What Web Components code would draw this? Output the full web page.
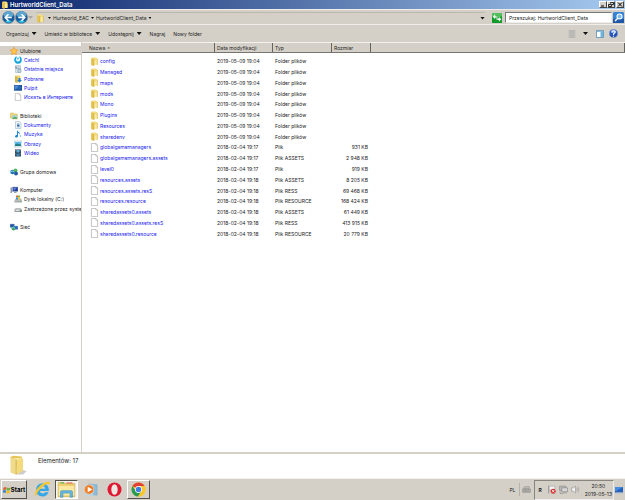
<!DOCTYPE html>
<html lang="pl">
<head>
<meta charset="utf-8">
<title>HurtworldClient_Data</title>
<style>
html, body { height: 100%; margin: 0; }
body { background: #fff; color: #222; font: 5px/8px Inter, "DejaVu Sans", sans-serif; --face: #d4d0c8; --link: #1717f0; overflow: hidden; }
</style>
</head>
<body>
<explorer-window>
  <title-bar slot="title">HurtworldClient_Data</title-bar>
  <address-bar slot="address"></address-bar>
  <command-bar slot="commands"></command-bar>
  <nav-tree slot="nav"></nav-tree>
  <file-list slot="files"></file-list>
  <details-pane slot="details">Elementów: 17</details-pane>
  <task-bar slot="taskbar"></task-bar>
</explorer-window>
<script>
const BASE = `<style>
*,:host{box-sizing:border-box}
button,input{font:inherit;color:inherit;margin:0;padding:0;border:0;background:none;border-radius:0;outline:0}
button{display:flex;align-items:center;white-space:nowrap}
a{color:inherit;text-decoration:none}
.arr{width:5px;height:3px;background:#111;clip-path:polygon(0 0,100% 0,50% 100%)}
</style>`;
const define = (name, html, setup) => customElements.define(name, class extends HTMLElement {
  constructor() {
    super();
    this.attachShadow({ mode: 'open' }).innerHTML = BASE + html;
  }
  connectedCallback() { if (setup) setup(this, this.shadowRoot); }
});

const ART = {
  folder: '<path d="M3 1h7l3 2v10H3z" fill="#f3dc7d"/><path d="M2 2l5 2v12l-5-2z" fill="#e3c251"/><path d="M7 6h6v8H7z" fill="#fbeb9f"/><path d="M7 4v12M13 3v11" stroke="#c9a63e" fill="none"/>',
  file: '<path d="M2.500.800h8l3 3v11.500h-11z" fill="#fff" stroke="#a6a6a6" stroke-width="1.200"/><path d="M10.500.800v3h3" fill="#eee" stroke="#a6a6a6"/>',
  star: '<path d="M8 .500l2.300 5 5.400.600-4 3.700 1.100 5.500L8 12.600 3.200 15.300l1.100-5.500-4-3.700 5.400-.600z" fill="#ffc64a" stroke="#e98d24" stroke-width="1.200"/>',
  catch: '<path d="M6 1C1.500 1 .500 5 .500 8S3 15.500 8 15.500 15.500 12 15.500 8 14.500 1 10 1l2 4c.800 3-.500 6-4 6S3.500 8 4.500 5z" fill="#11a5df"/><path d="M8 3v4" stroke="#11a5df" stroke-width="2.500"/>',
  recent: '<path d="M3 1h10v14H3z" fill="#dce8ef" stroke="#91a8b7"/><path d="M5 4h6M5 7h8M7 10h6" stroke="#6d8798"/><path d="M1 3l5 1-1 5z" fill="#8097a5"/><circle cx="11" cy="12" r="3.500" fill="#c4d5e2" stroke="#738b9b"/>',
  download: '<path d="M2 1h9l2 2v12H2z" fill="#f0d678"/><path d="M2 2l5 2v12l-5-2z" fill="#d5b446"/><path d="M9 6h4v4h3l-5 5-5-5h3z" fill="#247dce"/>',
  desktop: '<path d="M0 2h16v11H0z" fill="#16427f"/><path d="M1 3h14v8H1z" fill="#2869b5"/><path d="M1 3h9L3 11H1z" fill="#4f8ed1"/><path d="M0 13h16" stroke="#5b89bc" stroke-width="2"/>',
  libraries: '<path d="M1 2h6l2 2h5v8H1z" fill="#f2da7d" stroke="#c9ac50"/><path d="M4 6h11v8H4z" fill="#a8dce2" stroke="#dcc15f"/><path d="M5 12l4-3 5 2v3H5z" fill="#5cac76"/>',
  docs: '<path d="M3 1h8l3 3v11H3z" fill="#eef5fa" stroke="#8fa8bb"/><path d="M6 5h5M6 12h5" stroke="#7395b0"/><path d="M6 7h5v4H6z" fill="#2d6ca9"/>',
  music: '<path d="M7 1c1 4 6 3 5 8-1-2-3-3-4-3v6c0 4-6 4-6 1 0-2 2-3 4-3V1z" fill="#2387d0"/><circle cx="13" cy="12" r="1.500" fill="#58b0e4"/>',
  pictures: '<path d="M0 2h16v12H0z" fill="#e9f4fa" stroke="#9ab2c2"/><path d="M2 4h12v8H2z" fill="#57bce9"/><path d="M2 9l4-2 8 2v3H2z" fill="#257f86"/>',
  video: '<path d="M2 1h12v14H2z" fill="#24374c"/><path d="M5 2h6v5H5z" fill="#5cb1df"/><path d="M5 9h6v5H5z" fill="#3c88b9"/><path d="M3.500 2v13M12.500 2v13" stroke="#dce7ee" stroke-dasharray="1.500 1.500"/>',
  homegroup: '<circle cx="5" cy="8" r="4.500" fill="#2375b9"/><circle cx="11" cy="5" r="4" fill="#56b760"/><circle cx="12" cy="11" r="4" fill="#2759a6"/><path d="M1 8q4-4 7 0" stroke="#8fd1ef" stroke-width="2" fill="none"/>',
  computer: '<path d="M1 3h3v11H1z" fill="#8d9bac"/><path d="M5 2h11v9H5z" fill="#1c3693" stroke="#9eacc6"/><path d="M7 3h7l-5 6H7z" fill="#5e81d2"/><path d="M8 12h5v2H8z" fill="#9ba7b8"/>',
  disk: '<path d="M1 10l3-3h10l2 3v5H1z" fill="#a9adaf"/><path d="M1 10h15" stroke="#eee"/><path d="M4 1h4v4H4z" fill="#e86a32"/><path d="M8 1h4v4H8z" fill="#79b943"/><path d="M4 5h4v4H4z" fill="#359ad9"/><path d="M8 5h4v4H8z" fill="#f6c536"/><circle cx="13" cy="13" r="1" fill="#4bb43d"/>',
  drive: '<path d="M1 9l3-3h9l3 3v5H1z" fill="#969b9f"/><path d="M2 9l2-2h9l2 2z" fill="#e4e6e7"/><path d="M3 11h8" stroke="#e1e4e5" stroke-width="2"/><circle cx="13" cy="12" r="1" fill="#36a336"/>',
  network: '<path d="M0 2h9v7H0z" fill="#1e53a8" stroke="#a9bfd8"/><path d="M7 6h9v7H7z" fill="#1f63bf" stroke="#a9bfd8"/><circle cx="7" cy="11" r="4" fill="#3ea45e"/><path d="M4 10q3-3 6 1" stroke="#6ec1ef" stroke-width="2" fill="none"/>',
  back: '<circle cx="8" cy="8" r="7.500" fill="#175fa1" stroke="#83909c"/><circle cx="8" cy="8" r="6.500" fill="#145c9c"/><path d="M2 6a6 6 0 0 1 12 0q-6 3-12 0" fill="#5ba5d0"/><path d="M4 13q4-3 8 0-4 3-8 0" fill="#33c5ef"/><path d="M12 8H4m4-4L4 8l4 4" fill="none" stroke="#fff" stroke-width="2"/>',
  refresh: '<rect width="16" height="16" rx="1" fill="#139a2c"/><path d="M0 0h16v5q-8 3-16 0" fill="#52bf5e"/><path d="M5 2L1 6l4 4V7.500h2V11h2V5H5zM11 14l4-4-4-4v2.500H9V5H7v6h4z" fill="#fff" opacity=".9"/><path d="M8 4v8" stroke="#139a2c"/>',
  search: '<rect width="16" height="16" rx="2" fill="#3482d6"/><path d="M0 10h16v6H0z" fill="#1f58a9"/><circle cx="9.500" cy="6.500" r="3.700" fill="#82bbed" stroke="#fff" stroke-width="1.500"/><path d="M7 9l-4 4" stroke="#fff" stroke-width="2"/>',
  views: '<path d="M1 1h14v14H1z" fill="#dddcd8"/><path d="M1 2h14M1 6h14M1 10h14M1 14h14" stroke="#8f8e8b" stroke-width="1.500"/><path d="M5 1v14M10 1v14" stroke="#b0afaa" stroke-width="1.500"/>',
  pane: '<path d="M1 1h14v14H1z" fill="#fff" stroke="#4d86ac" stroke-width="1.500"/><path d="M9 4h5v10H9z" fill="#69b6e2"/><path d="M1 2.500h14" stroke="#6aa5ca" stroke-width="2"/>',
  help: '<circle cx="8" cy="8" r="7.300" fill="#2653b9" stroke="#8097c4"/><path d="M3 6a5 5 0 0 1 10 0q-5 2-10 0" fill="#6e96e4"/><path d="M5.500 6q0-3 3-2.600 3.300.400 2 3.200L8 9v1.500M8 12v1.700" stroke="#fff" stroke-width="1.900" fill="none"/>',
  bigfolder: '<path d="M9 11l6 2-3 2.500H6z" fill="#aaa" opacity=".6"/><path d="M2 1.500l2-1 7 .700v12L4 15z" fill="#e5c454"/><path d="M5 2.500h5.500v10.500L5 14z" fill="#fff6c6"/><path d="M6 4l6-1.500v10L7 15.500z" fill="#f3da7d"/><path d="M2 1.500l4.500 2V15.500L2 14z" fill="#f0da8c"/><path d="M6.500 3.500v12" stroke="#c9aa48" stroke-width=".600"/>',
  flag: '<path d="M1 4q3-3 6-1L6 8Q4 6 0 8z" fill="#e1562c"/><path d="M8 3q3 2 7 0l-1 5q-4 2-7 0z" fill="#69b23c"/><path d="M0 9q3-2 6 0l-1 5q-3-2-6 0z" fill="#2f7fd0"/><path d="M7 9q3 2 7 0l-1 5q-4 2-7 0z" fill="#f4bd26"/>',
  ie: '<path d="M14 9.500H5.300q.400 2.300 2.900 2.300 1.500 0 2.300-1.200h3.200Q12.300 14.500 8.200 14.500q-6-.300-6.200-6.300Q2.300 2 8.200 2q6 .300 5.800 7.500zM5.300 7.200h5.400Q10.300 4.700 8 4.700T5.300 7.200z" fill="#35a7e6" fill-rule="evenodd"/><path d="M2.300 14.500C-.500 13 1 9.500 4 6S13-.800 14.800 1.200c.700.800.400 2-.200 3.300.200-1.200-.200-2-1.300-2C10.500 2.500 1.500 10 2.300 14.500z" fill="#f6c62d"/>',
  explorer: '<path d="M1 2h5l1 1h8v11H1z" fill="#edcf70" stroke="#cba947" stroke-width=".500"/><path d="M3 2h3v1H3z" fill="#55b65d"/><path d="M8 2h5v1H8z" fill="#e0715c"/><path d="M1.500 5h13v8h-13z" fill="#fbe8a0"/><path d="M3 14.500V10q0-1 1-1h8q1 0 1 1v4.500h-2V11H5v3.500z" fill="#67b8df" stroke="#3c8fb9" stroke-width=".500"/>',
  wmp: '<path d="M6 2l9 1v11l-9-1z" fill="#8dbddc" stroke="#6b9fbe" stroke-width=".500"/><path d="M2 2l9 1v12l-9-1z" fill="#b3d8ee" opacity=".800"/><circle cx="6.500" cy="8" r="5" fill="#f17b22" stroke="#e9d1ba" stroke-width=".700"/><path d="M5 5l5 3-5 3z" fill="#fff"/>',
  opera: '<ellipse cx="8" cy="8" rx="7.500" ry="7.500" fill="#df1932"/><ellipse cx="8" cy="8" rx="3.400" ry="5.600" fill="#eee8e3"/>',
  chrome: '<circle cx="8" cy="8" r="7.500" fill="#fbc72d"/><path d="M8 8L1.500 4.250A7.500 7.500 0 0 1 14.500 4.250H8z" fill="#e34133"/><path d="M1.500 4.250A7.500 7.500 0 0 0 7.500 15.500L11 10 8 8 5 9.500z" fill="#299b52"/><path d="M8 4.250h6.500A7.500 7.500 0 0 1 7.500 15.500L11.200 10z" fill="#fbc72d"/><circle cx="8" cy="8" r="3.700" fill="#fff"/><circle cx="8" cy="8" r="2.900" fill="#3f7ee3"/>',
  keyboard: '<path d="M4 3h9l-1 4H3z" fill="#c2c1bd" stroke="#8d8c88"/><path d="M1 7h14v6H1z" fill="#b5b4b0" stroke="#878682"/><path d="M3 9h10M3 11h10" stroke="#777" stroke-dasharray="1.500 1"/>',
  action: '<path d="M3 1v14" stroke="#8b8b8b" stroke-width="1.500"/><path d="M4 2h10v7H4z" fill="#f4f4f4" stroke="#999"/><circle cx="11" cy="11" r="4.500" fill="#d63539"/><path d="M9 9l4 4m0-4l-4 4" stroke="#fff" stroke-width="1.500"/>',
  lan: '<path d="M1 2h11v8H1z" fill="#bbb" stroke="#838383"/><path d="M5 5h10v7H5z" fill="#d8d8d8" stroke="#777"/><path d="M7 14h7M2 12v3h5" stroke="#777" fill="none"/>',
  sound: '<path d="M1 5h3l4-3v12l-4-3H1z" fill="#f3f3f3" stroke="#858585"/><path d="M10 5q2 3 0 6M12 3q4 5 0 10" stroke="#929292" fill="none"/>',
  showdesk: '<path d="M0 2h16v11H0z" fill="#2361bd"/><path d="M0 2h16L3 10H0z" fill="#458be0"/><path d="M3 14h11" stroke="#a9bcd3" stroke-width="2"/>'
};
customElements.define('ui-icon', class extends HTMLElement {
  connectedCallback() {
    if (this.shadowRoot) return;
    this.attachShadow({ mode: 'open' }).innerHTML = `<style>:host{display:block;flex:none;width:var(--size,8px);height:var(--size,8px)}svg{display:block;width:100%;height:100%}</style><svg viewBox="0 0 16 16" aria-hidden="true">${ART[this.getAttribute('name')]}</svg>`;
  }
});

define('explorer-window', `<style>
:host{display:flex;flex-direction:column;height:100%;background:var(--face)}
main{flex:1;min-height:0;display:grid;grid-template-columns:81px 1fr;column-gap:1px}
</style><slot name="title"></slot><slot name="address"></slot><slot name="commands"></slot>
<main><slot name="nav"></slot><slot name="files"></slot></main><slot name="details"></slot><slot name="taskbar"></slot>`);

define('title-bar', `<style>
:host{display:flex;align-items:center;height:9px;background:linear-gradient(90deg,#0a246a,#a6caf0);color:#fff;font-size:6px;font-weight:600;padding:0 1px;gap:1px}
h1{font:inherit;margin:0;flex:1}
.b{display:flex}
button{width:8px;height:7px;background:var(--face);border:1px solid;border-color:#fff #404040 #404040 #fff;justify-content:center}
button:last-child{margin-left:1px}
svg{width:6px;height:5px;flex:none}
path{fill:none;stroke:#000}
</style><ui-icon name="folder"></ui-icon><h1><slot></slot></h1><div class="b">
<button aria-label="Minimalizuj"><svg viewBox="0 0 6 5"><path d="M1 4h3"/></svg></button>
<button aria-label="Przywróć"><svg viewBox="0 0 6 5"><path d="M2.500 1.500V.500h3v2H4M.500 2.500h3v2h-3z" stroke-width=".800"/></svg></button>
<button aria-label="Zamknij"><svg viewBox="0 0 6 5"><path d="M1 .500l4 4m0-4l-4 4"/></svg></button></div>`);

define('address-bar', `<style>
:host{display:flex;align-items:center;height:16px;padding:1px 1px 0 2px;border-bottom:1px solid #f0eeea;border-top:1px solid #f0eeea}
.nav{display:flex;--size:13px}
.nav .fwd{transform:scaleX(-1)}
.nav .arr{background:#aaa8a3}
.path{flex:1;display:flex;align-items:center;gap:2px;margin:0 7px 0 3px;height:12px;border-top:1px solid #bbb8b0}
.path ui-icon{--size:9px;margin-right:1px}
.dot{width:3px;height:2px;background:#111;clip-path:polygon(0 0,100% 0,50% 100%)}
.path .last{margin-left:auto}
.go{--size:10px;margin-right:3px}
input{width:107px;height:11px;background:#fff;border:1px solid;border-color:#777 #eee #eee #777;padding:0 3px}
input::placeholder{color:#222;opacity:1}
.find{--size:11px;margin-left:1px}
</style><div class="nav"><button aria-label="Wstecz"><ui-icon name="back"></ui-icon></button><button class="fwd" aria-label="Dalej"><ui-icon name="back"></ui-icon></button><button aria-label="Ostatnie strony"><i class="arr"></i></button></div>
<div class="path"><ui-icon name="folder"></ui-icon><i class="dot"></i><button>Hurtworld_EAC</button><i class="dot"></i><button>HurtworldClient_Data</button><i class="dot"></i><button class="last" aria-label="Poprzednie lokalizacje"><i class="arr"></i></button></div>
<button class="go" aria-label="Odśwież"><ui-icon name="refresh"></ui-icon></button>
<input type="search" aria-label="Przeszukaj" placeholder="Przeszukaj: HurtworldClient_Data">
<button class="find" aria-label="Szukaj"><ui-icon name="search"></ui-icon></button>`);

define('command-bar', `<style>
:host{display:flex;align-items:center;height:17px;padding:0 7px 0 6px;gap:8px}
button{gap:3px}
.r{margin-left:auto;display:flex;gap:5px;align-items:center}
.r button{gap:7px}
.r button:first-child{margin-right:3px}
.help{--size:9px}
</style><button>Organizuj<i class="arr"></i></button><button>Umieść w bibliotece<i class="arr"></i></button><button>Udostępnij<i class="arr"></i></button><button>Nagraj</button><button>Nowy folder</button>
<div class="r"><button aria-label="Zmień widok"><ui-icon name="views"></ui-icon><i class="arr"></i></button><button aria-label="Okienko podglądu"><ui-icon name="pane"></ui-icon></button><button class="help" aria-label="Pomoc"><ui-icon name="help"></ui-icon></button></div>`);

const TREE = [
  ['star', 'Ulubione', 0], ['catch', 'Catch!', 1], ['recent', 'Ostatnie miejsca', 1], ['download', 'Pobrane', 1], ['desktop', 'Pulpit', 1], ['file', 'Искать в Интернете', 1], null,
  ['libraries', 'Biblioteki', 0], ['docs', 'Dokumenty', 1], ['music', 'Muzyka', 1], ['pictures', 'Obrazy', 1], ['video', 'Wideo', 1], null,
  ['homegroup', 'Grupa domowa', 0], null,
  ['computer', 'Komputer', 0], ['disk', 'Dysk lokalny (C:)', 2], ['drive', 'Zastrzeżone przez syste', 2], null,
  ['network', 'Sieć', 0]
];
define('nav-tree', `<style>
:host{display:block;background:#fff;padding-top:4px;overflow:hidden}
ul{list-style:none;margin:0;padding:0;display:grid;grid-template-rows:repeat(20,1fr);height:186px}
li{min-height:0;display:flex;align-items:center;padding-left:10px}
li:first-child{background:var(--face)}
a{display:flex;align-items:center;gap:2px;white-space:nowrap}
.l1,.l2{padding-left:14px}
.l1{color:var(--link)}
</style><ul></ul>`, (el, root) => {
  root.querySelector('ul').innerHTML = TREE.map(t => t ? `<li class="l${t[2]}"><a href="#"><ui-icon name="${t[0]}"></ui-icon>${t[1]}</a></li>` : '<li role="presentation"></li>').join('');
});

const FILES = [
  ...['config', 'Managed', 'maps', 'mods', 'Mono', 'Plugins', 'Resources', 'sharedenv'].map(n => [n, '2019-05-09 19:04', 'Folder plików', '']),
  ['globalgamemanagers', '2018-02-04 19:17', 'Plik', '931 KB'],
  ['globalgamemanagers.assets', '2018-02-04 19:17', 'Plik ASSETS', '2 948 KB'],
  ['level0', '2018-02-04 19:17', 'Plik', '919 KB'],
  ['resources.assets', '2018-02-04 19:18', 'Plik ASSETS', '8 205 KB'],
  ['resources.assets.resS', '2018-02-04 19:18', 'Plik RESS', '69 468 KB'],
  ['resources.resource', '2018-02-04 19:18', 'Plik RESOURCE', '168 424 KB'],
  ['sharedassets0.assets', '2018-02-04 19:18', 'Plik ASSETS', '61 449 KB'],
  ['sharedassets0.assets.resS', '2018-02-04 19:18', 'Plik RESS', '413 915 KB'],
  ['sharedassets0.resource', '2018-02-04 19:18', 'Plik RESOURCE', '20 779 KB']
];
define('file-list', `<style>
:host{display:block;background:#fff;min-width:0}
table,thead{display:block}
tbody{display:grid;grid-auto-rows:1fr;height:183px;margin-top:3px}
tr{display:grid;grid-template-columns:133px 58px 59px 39px 1fr;align-items:center}
thead tr{height:11px;background:var(--face);border-top:1px solid #f4f2ee;border-bottom:1px solid #77756f;align-items:stretch}
th{font-weight:400;text-align:left;padding:0 2px;border-right:1px solid #66645f;display:flex;align-items:center;gap:2px}
th:first-child{padding-left:7px}
td{padding:0 0 0 2px;white-space:nowrap}
td:first-child{padding-left:8px}
td:nth-child(4){text-align:right;padding:0 3px 0 0}
a{display:flex;align-items:center;gap:1px;color:var(--link);--size:9px}
.up{width:3px;height:2px;background:#77756f;clip-path:polygon(50% 0,100% 100%,0 100%)}
</style><table><thead><tr><th>Nazwa<i class="up"></i></th><th>Data modyfikacji</th><th>Typ</th><th>Rozmiar</th><th></th></tr></thead><tbody></tbody></table>`, (el, root) => {
  root.querySelector('tbody').innerHTML = FILES.map(f => `<tr><td><a href="#"><ui-icon name="${f[3] ? 'file' : 'folder'}"></ui-icon>${f[0]}</a></td><td>${f[1]}</td><td>${f[2]}</td><td>${f[3]}</td><td></td></tr>`).join('');
});

define('details-pane', `<style>
:host{display:flex;height:26px;background:#fff;border-top:2px solid var(--face);padding:1px 8px;gap:10px;font-size:6px;--size:20px}
span{padding-top:2px}
</style><ui-icon name="bigfolder"></ui-icon><span><slot></slot></span>`);

define('task-bar', `<style>
:host{display:flex;align-items:center;height:22px;background:var(--face);border-top:1px solid #f4f2ee;padding:0 2px 0 1px}
.raised{border:1px solid;border-color:#fff #55534e #55534e #fff}
.start{height:19px;width:26px;justify-content:center;font-size:6px;font-weight:700;color:#000}
.apps{display:flex;--size:17px;margin-left:4px;gap:1px}
.apps button{width:23px;height:19px;justify-content:center}
.apps .on{background:#f6f4f0;border:1px solid;border-color:#55534e #fff #fff #55534e;--size:19px}
.apps .on ~ button{--size:15px}
.tray{margin-left:auto;display:flex;align-items:center;--size:9px}
.kb{border-left:1px solid #b5b2aa;margin-left:4px;padding:0 3px 0 2px;height:13px}
.box{display:flex;align-items:center;gap:3px;height:20px;border:1px solid;border-color:#88857e #eee #eee #88857e;padding:0 1px 0 3px}
.r{font-weight:700;padding-right:2px}
time{text-align:center;padding-left:2px}
time span{display:block}
.show{--size:8px;margin-left:1px}
</style><button class="start raised"><ui-icon name="flag"></ui-icon>Start</button>
<div class="apps"><button aria-label="Internet Explorer"><ui-icon name="ie"></ui-icon></button><button class="on" aria-label="Eksplorator Windows"><ui-icon name="explorer"></ui-icon></button><button aria-label="Windows Media Player"><ui-icon name="wmp"></ui-icon></button><button aria-label="Opera"><ui-icon name="opera"></ui-icon></button><button class="raised" aria-label="Google Chrome"><ui-icon name="chrome"></ui-icon></button></div>
<div class="tray"><span>PL</span><button class="kb" aria-label="Klawiatura"><ui-icon name="keyboard"></ui-icon></button>
<div class="box"><span class="r">R</span><ui-icon name="action"></ui-icon><ui-icon name="lan"></ui-icon><ui-icon name="sound"></ui-icon><time><span>20:50</span><span>2019-05-13</span></time></div>
<button class="show" aria-label="Pokaż pulpit"><ui-icon name="showdesk"></ui-icon></button></div>`);
</script>
</body>
</html>
